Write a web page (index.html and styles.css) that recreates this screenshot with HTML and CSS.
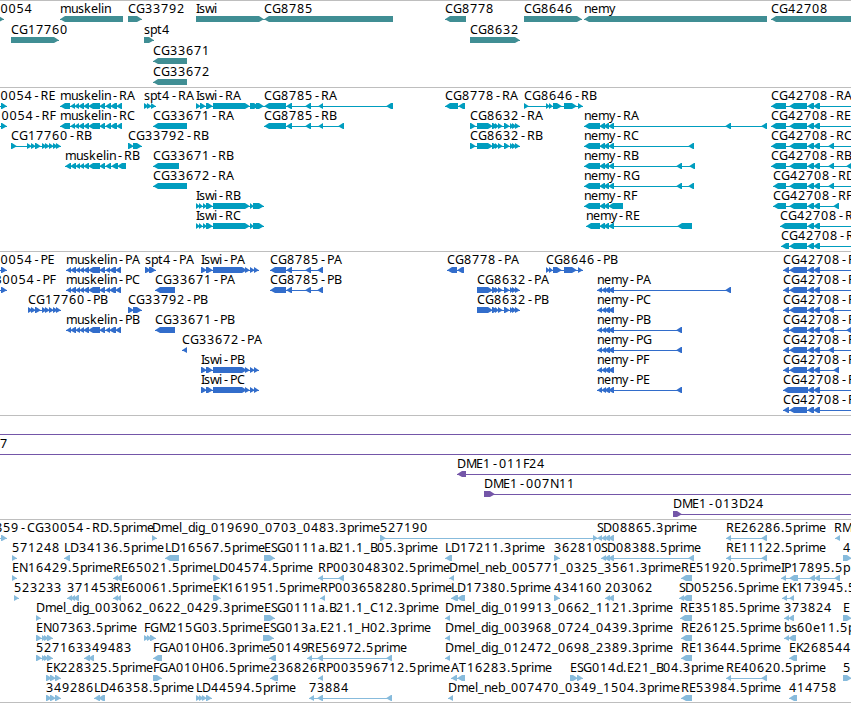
FILE: index.html
```
<!DOCTYPE html>
<html lang="en">
  <head>
    <meta charset="UTF-8" />
    <meta name="viewport" content="width=device-width, initial-scale=1.0" />
    <title>Genome Browser</title>
    <link rel="stylesheet" href="styles.css">
  </head>
  <body>
    <main class="browser">
      <section class="track genes" id="genes"></section>
      <section class="track transcripts" id="transcripts"></section>
      <section class="track proteins" id="proteins"></section>
      <section class="track clones" id="clones"></section>
      <section class="track ests" id="ests"></section>
    </main>
    <script src="tracks.js"></script>
  </body>
</html>
```

FILE: styles.css
```
* {
  margin: 0;
  padding: 0;
  box-sizing: border-box;
}

body {
  background: #ffffff;
  overflow: hidden;
}

.browser {
  width: 851px;
  border-bottom: 1px solid #bebebe;
}

.track {
  border-top: 1px solid #bebebe;
}

.track svg {
  display: block;
  width: 100%;
  height: 100%;
  overflow: hidden;
}

.genes {
  height: 87px;
  color: #408e94;
}

.transcripts {
  height: 164px;
  color: #009dbf;
}

.proteins {
  height: 164px;
  color: #326dcb;
}

.clones {
  height: 104px;
  color: #7456a8;
}

.ests {
  height: 183px;
  color: #87bbdc;
}

.label {
  font-family: "Noto Sans", "Open Sans", sans-serif;
  font-size: 12.5px;
  fill: #000000;
}

.exon,
.intron {
  fill: currentColor;
}

.intron {
  shape-rendering: crispEdges;
}
```

FILE: tracks.js
```
var SVG_NS = "http://www.w3.org/2000/svg";
var WIDTH = 851;
var HEAD = 5;
var OFF = 865; // past the right edge

// pixel advance of each label character
var ADVANCE = {
  C: 8, G: 9, "-": 8, R: 8, A: 8, B: 7, E: 7, F: 6, P: 7, I: 3, D: 9, L: 6,
  M: 10, S: 6, T: 8, K: 7, N: 9, H: 9, s: 6, w: 9, i: 3, m: 11, u: 7, k: 7,
  e: 7, l: 3, n: 7, y: 6, p: 7, t: 5, r: 5, d: 7, g: 7, a: 7, b: 7,
  ".": 4, _: 6
};

var MUSKELIN = "60-70 70-75 74-79 78-84 83-89 88-100 99-105 105-111 110-117 116-122";
var MUSKELIN_B = "65-71 70-76 75-80 79-84 83-89 88-100 99-105 105-111 111-118 117-126";
var MUSKELIN_P = "66-71 70-76 75-80 79-84 83-89 88-100 99-105 105-110 109-116 115-121";
var ISWI = "196-200 199-203 203-207 206-213 213-250 250-254 253-264";
var ISWI_P = "201-207 206-213 213-247 245-250 250-255 254-259";
var CG8632 = "477-493 492-498 495-499 498-503 504-510 510-514 512-517 515-520";
var NEMY = "584-600 599-605 603-609 608-614";
var NEMY_P = "597-602 601-606 604-610 608-614";
var CG42708 = " 789-807 807-814 813-820";

// row, start, label, strand, exons, end of line (when it runs past the last exon)
var TRACKS = {
  genes: {
    pitch: 21,
    features: [
      [0, 0.5, "0054", "+", "-24-4"],
      [0, 60, "muskelin", "-", "60-123"],
      [0, 128, "CG33792", "+", "128-142"],
      [0, 196, "Iswi", "+", "196-264"],
      [0, 264, "CG8785", "-", "264-393"],
      [0, 445, "CG8778", "-", "445-466"],
      [0, 524, "CG8646", "+", "524-582"],
      [0, 584, "nemy", "-", "584-767"],
      [0, 771, "CG42708", "-", "771-865"],
      [1, 11, "CG17760", "+", "11-59"],
      [1, 144, "spt4", "+", "144-154"],
      [1, 470, "CG8632", "+", "470-520"],
      [2, 153, "CG33671", "-", "153-187"],
      [3, 153, "CG33672", "-", "153-187"]
    ]
  },
  transcripts: {
    pitch: 20,
    features: [
      [0, 0.5, "0054-RE", "+", "-24--10 1-7"],
      [0, 60, "muskelin-RA", "-", MUSKELIN],
      [0, 144, "spt4-RA", "+", "144-149 147-152 151-156"],
      [0, 196, "Iswi-RA", "+", "196-201 200-206 206-213 213-250 250-259 256-264"],
      [0, 264, "CG8785-RA", "-", "264-286 286-292 305-311 318-323 386-393"],
      [0, 445, "CG8778-RA", "-", "445-458 458-465"],
      [0, 524, "CG8646-RB", "+", "524-529 546-550 549-553 553-562 564-577 578-583"],
      [0, 771, "CG42708-RA", "-", "771-786" + CG42708, OFF],
      [1, 1.5, "0054-RF", "+", "-24--10 1-7"],
      [1, 60, "muskelin-RC", "-", MUSKELIN],
      [1, 153, "CG33671-RA", "-", "153-187"],
      [1, 264, "CG8785-RB", "-", "264-286 286-292 305-311 318-323 338-344"],
      [1, 470, "CG8632-RA", "+", "470-476 " + CG8632],
      [1, 584, "nemy-RA", "-", NEMY + " 725-731 761-767"],
      [1, 771, "CG42708-RE", "-", "771-786" + CG42708, OFF],
      [2, 11, "CG17760-RB", "+", "11-17 27-32 31-36 35-41 42-47 45-50 49-54 53-58 56-61"],
      [2, 128, "CG33792-RB", "+", "128-134 133-142"],
      [2, 470, "CG8632-RB", "+", "470-476 " + CG8632],
      [2, 584, "nemy-RC", "-", NEMY + " 688-694"],
      [2, 771, "CG42708-RC", "-", "771-786" + CG42708 + " 828-834", OFF],
      [3, 65, "muskelin-RB", "-", MUSKELIN_B],
      [3, 153, "CG33671-RB", "-", "153-179"],
      [3, 584, "nemy-RB", "-", NEMY + " 676-682 689-695"],
      [3, 771, "CG42708-RB", "-", "771-786" + CG42708 + " 828-834 846-852", OFF],
      [4, 153, "CG33672-RA", "-", "153-187"],
      [4, 584, "nemy-RG", "-", NEMY + " 676-682 688-694"],
      [4, 773, "CG42708-RD", "-", "773-786" + CG42708 + " 828-834", OFF],
      [5, 196, "Iswi-RB", "+", ISWI],
      [5, 584, "nemy-RF", "-", NEMY + " 609-623"],
      [5, 773, "CG42708-RF", "-", "773-786" + CG42708 + " 833-839"],
      [6, 196, "Iswi-RC", "+", ISWI],
      [6, 586, "nemy-RE", "-", "586-600 599-605 603-609 608-614 677-692"],
      [6, 780, "CG42708-RG", "-", "780-807 807-814 813-820", OFF],
      [7, 781, "CG42708-RH", "-", "781-789" + CG42708, OFF]
    ]
  },
  proteins: {
    pitch: 20,
    features: [
      [0, 0.5, "0054-PE", "+", "-24--10 1-7"],
      [0, 66, "muskelin-PA", "-", MUSKELIN_P],
      [0, 145, "spt4-PA", "+", "145-151 149-156"],
      [0, 201, "Iswi-PA", "+", ISWI_P],
      [0, 270, "CG8785-PA", "-", "270-286 286-292 305-311 317-323"],
      [0, 447, "CG8778-PA", "-", "447-457 457-464"],
      [0, 546, "CG8646-PB", "+", "546-550 549-553 553-562 564-577 578-583"],
      [0, 783, "CG42708-PA", "-", "783-789" + CG42708, OFF],
      [1, -5.5, "30054-PF", "+", "-24--10 1-7"],
      [1, 66, "muskelin-PC", "-", MUSKELIN_P],
      [1, 155, "CG33671-PA", "-", "155-175"],
      [1, 270, "CG8785-PB", "-", "270-286 286-292 305-311 317-323"],
      [1, 477, "CG8632-PA", "+", CG8632],
      [1, 597, "nemy-PA", "-", NEMY_P + " 725-731"],
      [1, 783, "CG42708-PE", "-", "783-789" + CG42708, OFF],
      [2, 28, "CG17760-PB", "+", "28-33 31-36 35-41 42-47 45-50 49-54 53-58 56-61"],
      [2, 128, "CG33792-PB", "+", "128-134 133-142"],
      [2, 477, "CG8632-PB", "+", CG8632],
      [2, 597, "nemy-PC", "-", NEMY_P],
      [2, 783, "CG42708-PC", "-", "783-789" + CG42708 + " 828-834", OFF],
      [3, 66, "muskelin-PB", "-", MUSKELIN_P],
      [3, 155, "CG33671-PB", "-", "155-175"],
      [3, 597, "nemy-PB", "-", NEMY_P + " 676-682"],
      [3, 783, "CG42708-PB", "-", "783-789" + CG42708 + " 828-834 846-852", OFF],
      [4, 182, "CG33672-PA", "-", "182-187"],
      [4, 597, "nemy-PG", "-", NEMY_P + " 676-682"],
      [4, 783, "CG42708-PD", "-", "783-789" + CG42708 + " 828-834", OFF],
      [5, 201, "Iswi-PB", "+", ISWI_P],
      [5, 597, "nemy-PF", "-", NEMY_P],
      [5, 783, "CG42708-PF", "-", "783-789" + CG42708 + " 833-839"],
      [6, 201, "Iswi-PC", "+", ISWI_P],
      [6, 597, "nemy-PE", "-", NEMY_P + " 676-682"],
      [6, 783, "CG42708-PG", "-", "783-808 807-814 813-820", OFF],
      [7, 783, "CG42708-PH", "-", "783-789" + CG42708, OFF]
    ]
  },
  clones: {
    pitch: 20,
    features: [
      [0, 0, "", "+", "", OFF],
      [1, 0, "7", "+", "", OFF],
      [2, 457, "DME1-011F24", "-", "457-466", OFF],
      [3, 484, "DME1-007N11", "+", "484-495", OFF],
      [4, 673, "DME1-013D24", "+", "673-682", OFF]
    ]
  },
  ests: {
    pitch: 20,
    features: [
      [0, -5, "859-CG30054-RD.5prime", "+", "-10--4 1-7"],
      [0, 152, "Dmel_dig_019690_0703_0483.3prime", "+", "152-157"],
      [0, 380, "527190", "+", "380-386 593-598"],
      [0, 597, "SD08865.3prime", "-", NEMY_P],
      [0, 726, "RE26286.5prime", "-", "726-731 761-767"],
      [0, 834, "RM", "-", "835-840"],
      [1, 12, "571248", "+", "12-17"],
      [1, 64, "LD34136.5prime", "-", "64-70"],
      [1, 165, "LD16567.5prime", "-", "165-179"],
      [1, 264, "ESG0111a.B21.1_B05.3prime", "+", "264-275"],
      [1, 445, "LD17211.3prime", "-", "445-452"],
      [1, 554, "362810", "+", "554-560"],
      [1, 601, "SD08388.5prime", "-", "601-606 604-610 608-614 688-694"],
      [1, 726, "RE11122.5prime", "-", "726-731 761-767"],
      [1, 843, "4", "+", "843-852"],
      [2, 12, "EN16429.5prime", "+", "12-17"],
      [2, 113, "RE65021.5prime", "-", "113-118 116-122"],
      [2, 213, "LD04574.5prime", "+", "213-220"],
      [2, 318, "RP003048302.5prime", "-", "318-323 338-344"],
      [2, 449, "Dmel_neb_005771_0325_3561.3prime", "-", "449-454"],
      [2, 681, "RE51920.5prime", "-", "681-692"],
      [2, 781, "IP17895.5prime", "-", "781-786 789-798 809-815 814-820 834-840"],
      [3, 14, "523233", "+", "14-19"],
      [3, 67, "371453", "-", "67-72 70-75 73-79"],
      [3, 113, "RE60061.5prime", "-", "113-118 116-121"],
      [3, 213, "EK161951.5prime", "+", "213-221"],
      [3, 320, "RP003658280.5prime", "-", "320-325"],
      [3, 451, "LD17380.5prime", "-", "451-458 457-465"],
      [3, 554, "434160", "+", "554-560"],
      [3, 605, "203062", "-", "605-610 608-614"],
      [3, 679, "SD05256.5prime", "-", "679-684 682-692"],
      [3, 782, "EK173945.5prime", "-", "782-787 789-794"],
      [4, 36, "Dmel_dig_003062_0622_0429.3prime", "+", "36-41"],
      [4, 264, "ESG0111a.B21.1_C12.3prime", "+", "264-275"],
      [4, 445, "Dmel_dig_019913_0662_1121.3prime", "-", "445-450"],
      [4, 680, "RE35185.5prime", "-", "680-692"],
      [4, 784, "373824", "-", "784-789 788-794"],
      [4, 843, "E", "+", "843-852"],
      [5, 36, "EN07363.5prime", "+", "36-42 42-46 44-49 47-53"],
      [5, 144, "FGM215G03.5prime", "+", "144-149 147-152 150-156"],
      [5, 263, "ESG013a.E21.1_H02.3prime", "+", "263-274"],
      [5, 445, "Dmel_dig_003968_0724_0439.3prime", "-", "445-450"],
      [5, 681, "RE26125.5prime", "-", "681-692"],
      [5, 784, "bs60e11.5prime", "-", "784-789 788-796"],
      [6, 36, "527163", "+", "36-42 42-46 44-49 47-53"],
      [6, 84, "349483", "-", "84-90 88-94"],
      [6, 153, "FGA010H06.3prime", "-", "153-162"],
      [6, 269, "50149", "-", "269-276"],
      [6, 307, "RE56972.5prime", "-", "307-312 317-323 386-392"],
      [6, 445, "Dmel_dig_012472_0698_2389.3prime", "-", "445-450"],
      [6, 681, "RE13644.5prime", "-", "681-692"],
      [6, 789, "EK268544", "-", "789-797"],
      [7, 46, "EK228325.5prime", "+", "46-52 50-56 55-61"],
      [7, 153, "FGA010H06.5prime", "+", "153-162"],
      [7, 270, "236826", "-", "270-278"],
      [7, 318, "RP003596712.5prime", "-", "318-323"],
      [7, 451, "AT16283.5prime", "-", "451-457 457-465"],
      [7, 570, "ESG014d.E21_B04.3prime", "+", "570-578 577-583"],
      [7, 726, "RE40620.5prime", "-", "726-731 761-767"],
      [7, 843, "5", "+", "843-852"],
      [8, 46, "349286", "+", "46-52 50-56 55-61"],
      [8, 94, "LD46358.5prime", "-", "94-100 98-105"],
      [8, 196, "LD44594.5prime", "+", "196-201 199-204 202-207 206-212"],
      [8, 309, "73884", "-", "309-314 317-323 386-392"],
      [8, 448, "Dmel_neb_007470_0349_1504.3prime", "-", "448-453"],
      [8, 681, "RE53984.5prime", "-", "681-692"],
      [8, 789, "414758", "-", "789-797"]
    ]
  }
};

function add(parent, name, attrs) {
  var el = document.createElementNS(SVG_NS, name);
  for (var key in attrs) {
    el.setAttribute(key, attrs[key]);
  }
  parent.appendChild(el);
  return el;
}

function drawLabel(svg, x, y, label) {
  var xs = [];
  var text = "";
  for (var i = 0; i < label.length && x < WIDTH - 1; i++) {
    // the hyphen sits in the middle of its wide cell
    xs.push(label[i] === "-" ? x + 2 : x);
    text += label[i];
    x += ADVANCE[label[i]] || 8;
  }
  add(svg, "text", { class: "label", x: xs.join(" "), y: y }).textContent = text;
}

// box with an arrow head on the strand side
function drawExon(svg, x1, x2, top, strand) {
  var head = Math.min(HEAD, x2 - x1);
  var mid = top + 3.3;
  var bottom = top + 6;
  var points;
  if (strand === "+") {
    points = [x1, top, x2 - head, top, x2, mid, x2 - head, bottom, x1, bottom];
  } else {
    points = [x2, top, x1 + head, top, x1, mid, x1 + head, bottom, x2, bottom];
  }
  add(svg, "polygon", { class: "exon", points: points.join(" ") });
}

function drawTrack(id) {
  var track = TRACKS[id];
  var svg = add(document.getElementById(id), "svg", {});
  track.features.forEach(function (f) {
    var top = f[0] * track.pitch + 15;
    var exons = (f[4].match(/-?\d+--?\d+/g) || []).map(function (range) {
      return range.match(/^(-?\d+)-(-?\d+)$/).slice(1).map(Number);
    });
    var start = exons.length ? exons[0][0] : f[1];
    var end = f[5] || exons[exons.length - 1][1];
    add(svg, "rect", { class: "intron", x: start, y: top + 3, width: end - start, height: 1 });
    exons.forEach(function (exon) {
      drawExon(svg, exon[0], exon[1], top, f[3]);
    });
    if (f[2]) {
      drawLabel(svg, f[1], top - 3, f[2]);
    }
  });
}

Object.keys(TRACKS).forEach(drawTrack);
```
